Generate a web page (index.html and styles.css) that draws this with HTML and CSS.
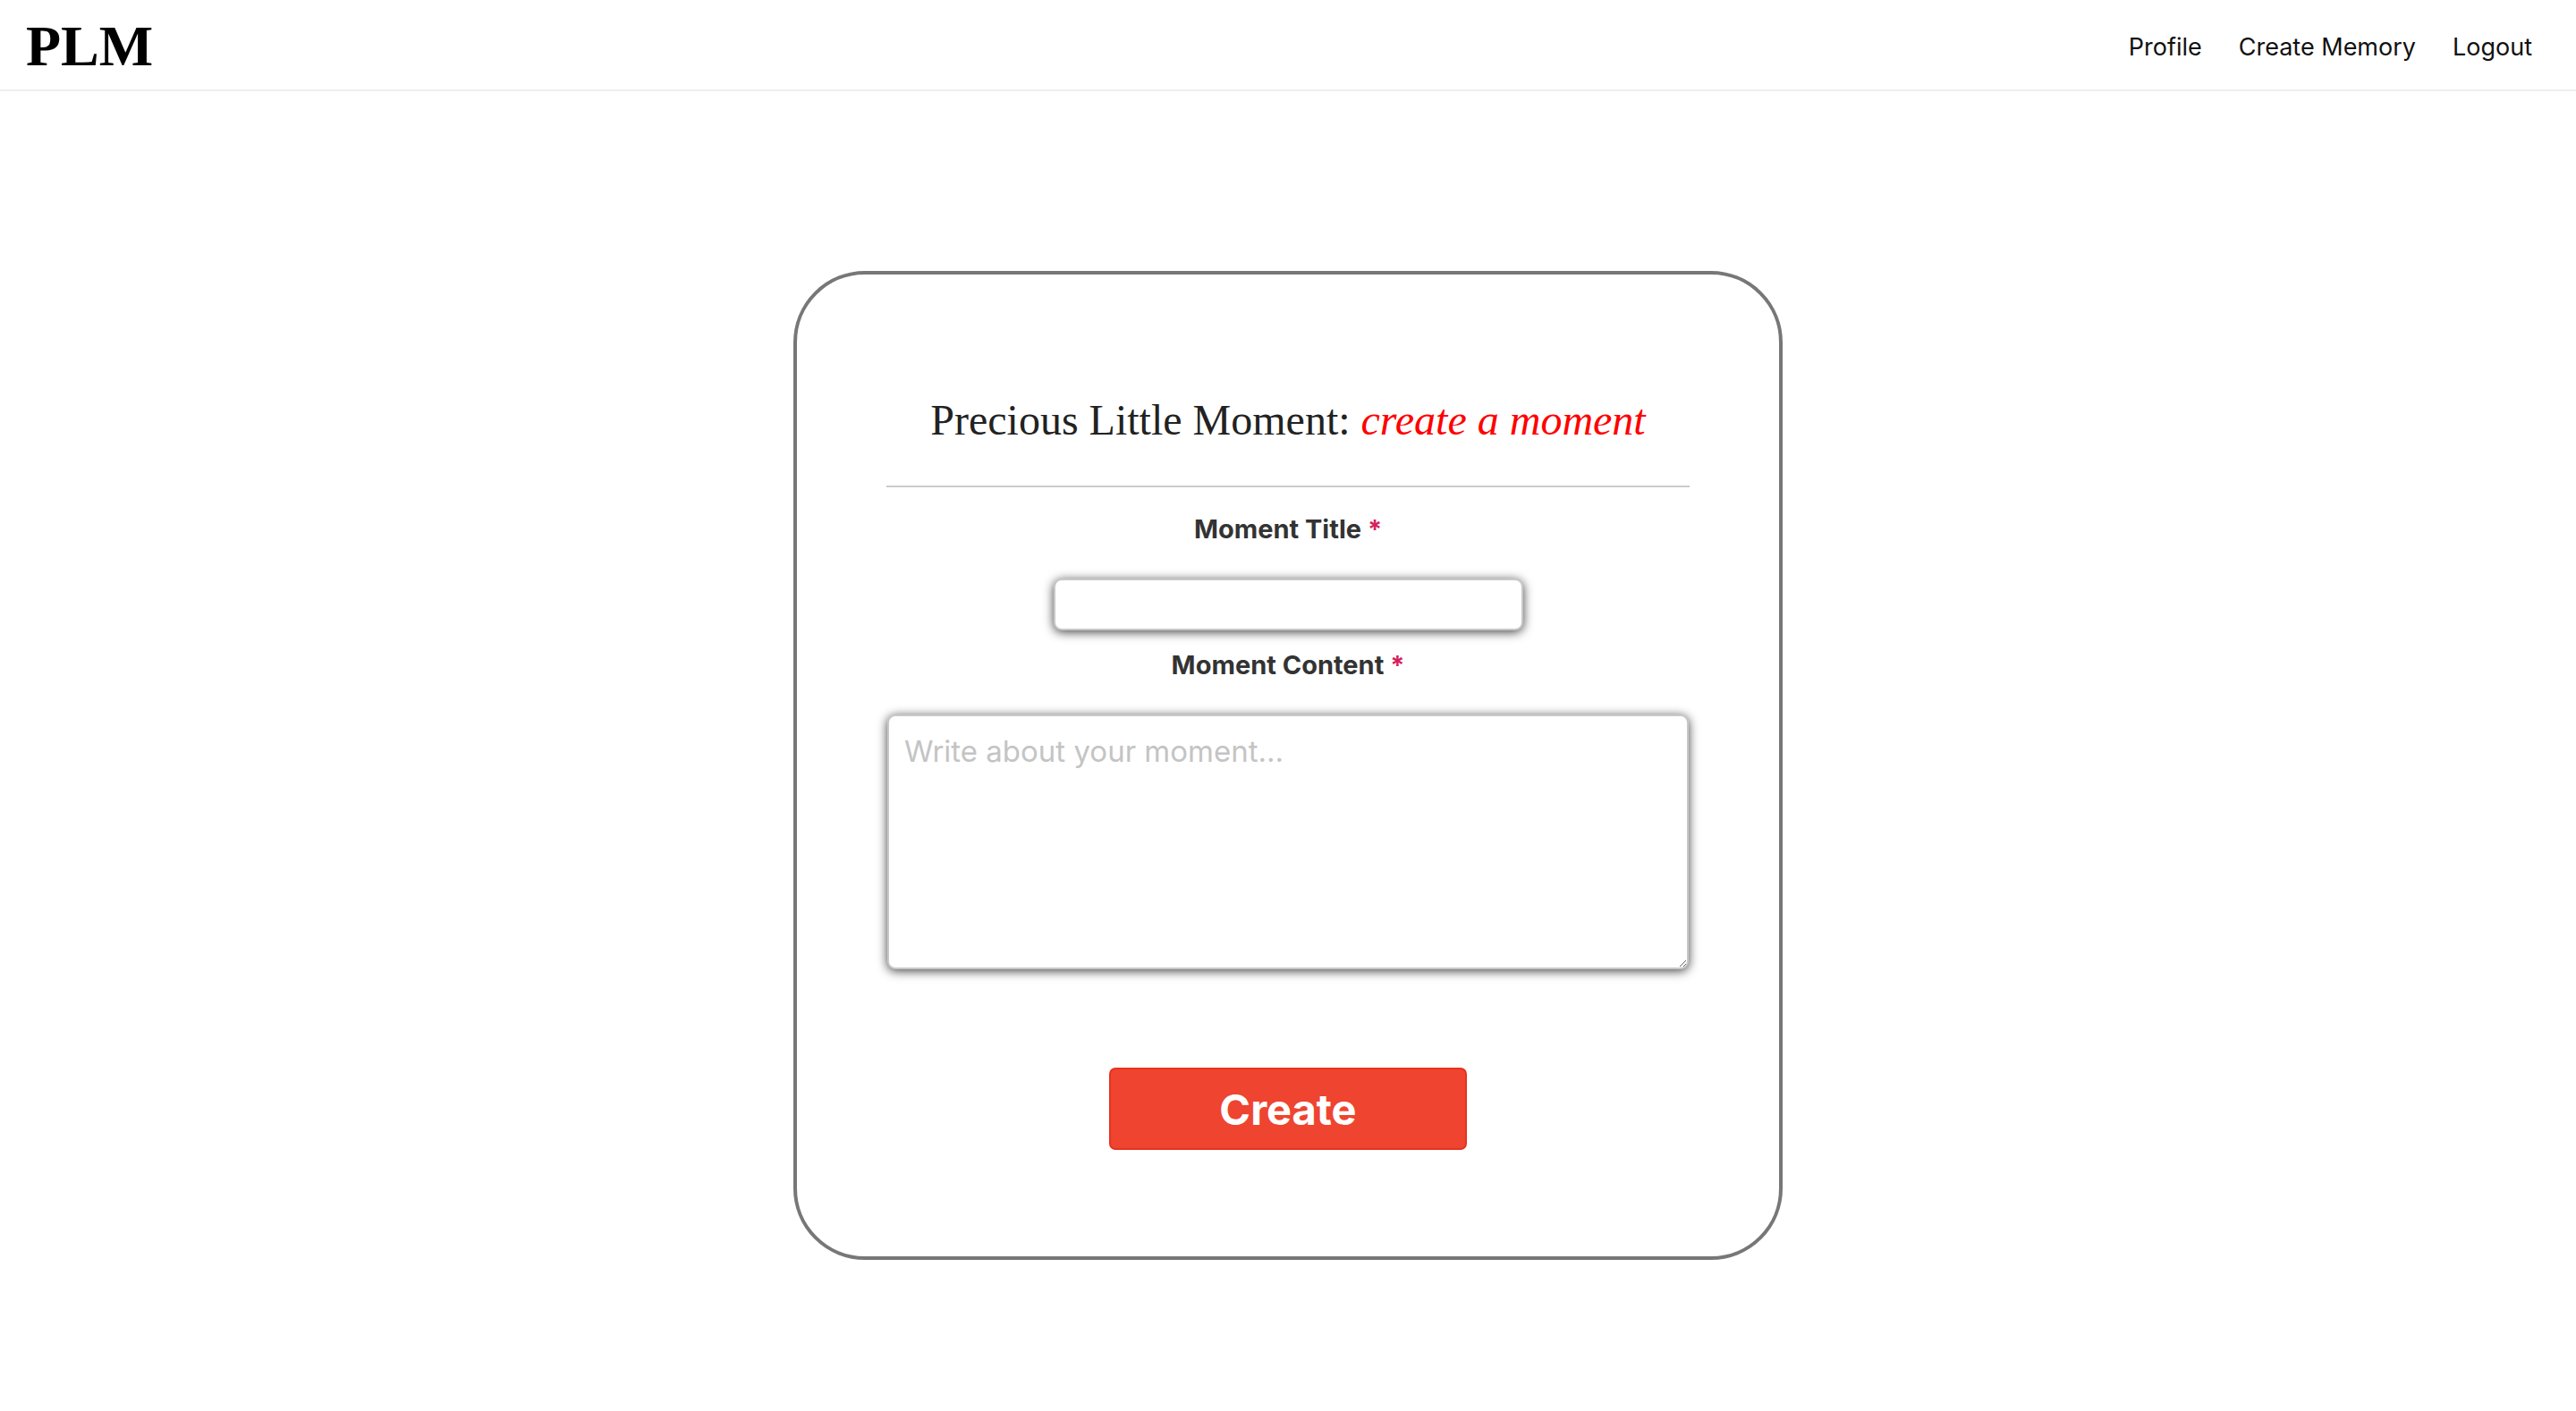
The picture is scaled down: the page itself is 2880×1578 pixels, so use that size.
FILE: index.html
```html
<!DOCTYPE html>
<html lang="en">
<head>
<meta charset="utf-8">
<title>PLM - Create a moment</title>
<link rel="stylesheet" href="styles.css">
</head>
<body>
<header class="topbar">
  <div class="brand">PLM</div>
  <nav class="nav">
    <a href="#" class="nav-link">Profile</a>
    <a href="#" class="nav-link">Create Memory</a>
    <a href="#" class="nav-link">Logout</a>
  </nav>
</header>
<main class="page">
  <form class="card">
    <h1 class="card-title">Precious Little Moment: <em class="accent">create a moment</em></h1>
    <hr class="divider">
    <label class="field-label" for="title">Moment Title <span class="req">*</span></label>
    <input class="title-input" id="title" type="text">
    <label class="field-label label-content" for="content">Moment Content <span class="req">*</span></label>
    <textarea class="content-input" id="content" placeholder="Write about your moment..."></textarea>
    <button class="create-btn" type="button">Create</button>
  </form>
</main>
</body>
</html>
```
FILE: styles.css
```css
html, body {
  margin: 0;
  padding: 0;
  background: #fff;
}
body {
  font-family: Inter, "Noto Sans", sans-serif;
  color: #222;
}
.topbar {
  height: 100px;
  border-bottom: 2px solid #eee;
  display: flex;
  align-items: center;
  justify-content: space-between;
  padding: 0 49px 0 29px;
}
.brand {
  font-family: "Liberation Serif", "Times New Roman", serif;
  font-weight: bold;
  font-size: 64px;
  color: #000;
  line-height: 1;
  margin-top: 4px;
}
.nav {
  display: flex;
  gap: 41px;
  margin-top: 4px;
}
.nav-link {
  font-size: 27px;
  color: #111;
  text-decoration: none;
}
.page {
  padding-top: 201px;
}
.card {
  box-sizing: border-box;
  width: 1106px;
  margin: 0 auto;
  border: 4px solid #777;
  border-radius: 80px;
  padding: 137px 100px 119px;
  display: flex;
  flex-direction: column;
  align-items: center;
}
.card-title {
  font-family: "Liberation Serif", "Times New Roman", serif;
  font-weight: normal;
  font-size: 48px;
  line-height: 52px;
  color: #222;
  margin: 0;
  text-align: center;
}
.accent {
  color: #ff0000;
  font-style: italic;
}
.divider {
  width: 100%;
  border: none;
  border-top: 2px solid #ccc;
  margin: 47px 0 0;
}
.field-label {
  font-weight: 700;
  font-size: 29px;
  line-height: 35px;
  color: #333;
  margin-top: 29px;
}
.label-content {
  margin-top: 21px;
}
.req {
  color: #d6215c;
}
.title-input {
  box-sizing: border-box;
  width: 525px;
  height: 58px;
  margin-top: 38px;
  border: 2px solid #c8c8c8;
  border-radius: 9px;
  box-shadow: 0 2px 12px rgba(0, 0, 0, 0.75);
  background: #fff;
  font-size: 28px;
  padding: 0 14px;
  outline: none;
}
.content-input {
  box-sizing: border-box;
  width: 896px;
  height: 285px;
  margin-top: 38px;
  border: 2px solid #c8c8c8;
  border-radius: 9px;
  box-shadow: 0 2px 12px rgba(0, 0, 0, 0.75);
  background: #fff;
  font-family: Inter, "Noto Sans", sans-serif;
  font-size: 33px;
  line-height: 1.25;
  padding: 19px 17px 14px;
  outline: none;
  resize: vertical;
}
.content-input::placeholder {
  color: #c4c4c4;
}
.create-btn {
  box-sizing: border-box;
  width: 400px;
  height: 92px;
  margin-top: 110px;
  background: #ee4430;
  border: 2px solid #e8321f;
  border-radius: 7px;
  color: #fff;
  font-family: Inter, "Noto Sans", sans-serif;
  font-weight: 700;
  font-size: 47px;
  cursor: pointer;
}
```
